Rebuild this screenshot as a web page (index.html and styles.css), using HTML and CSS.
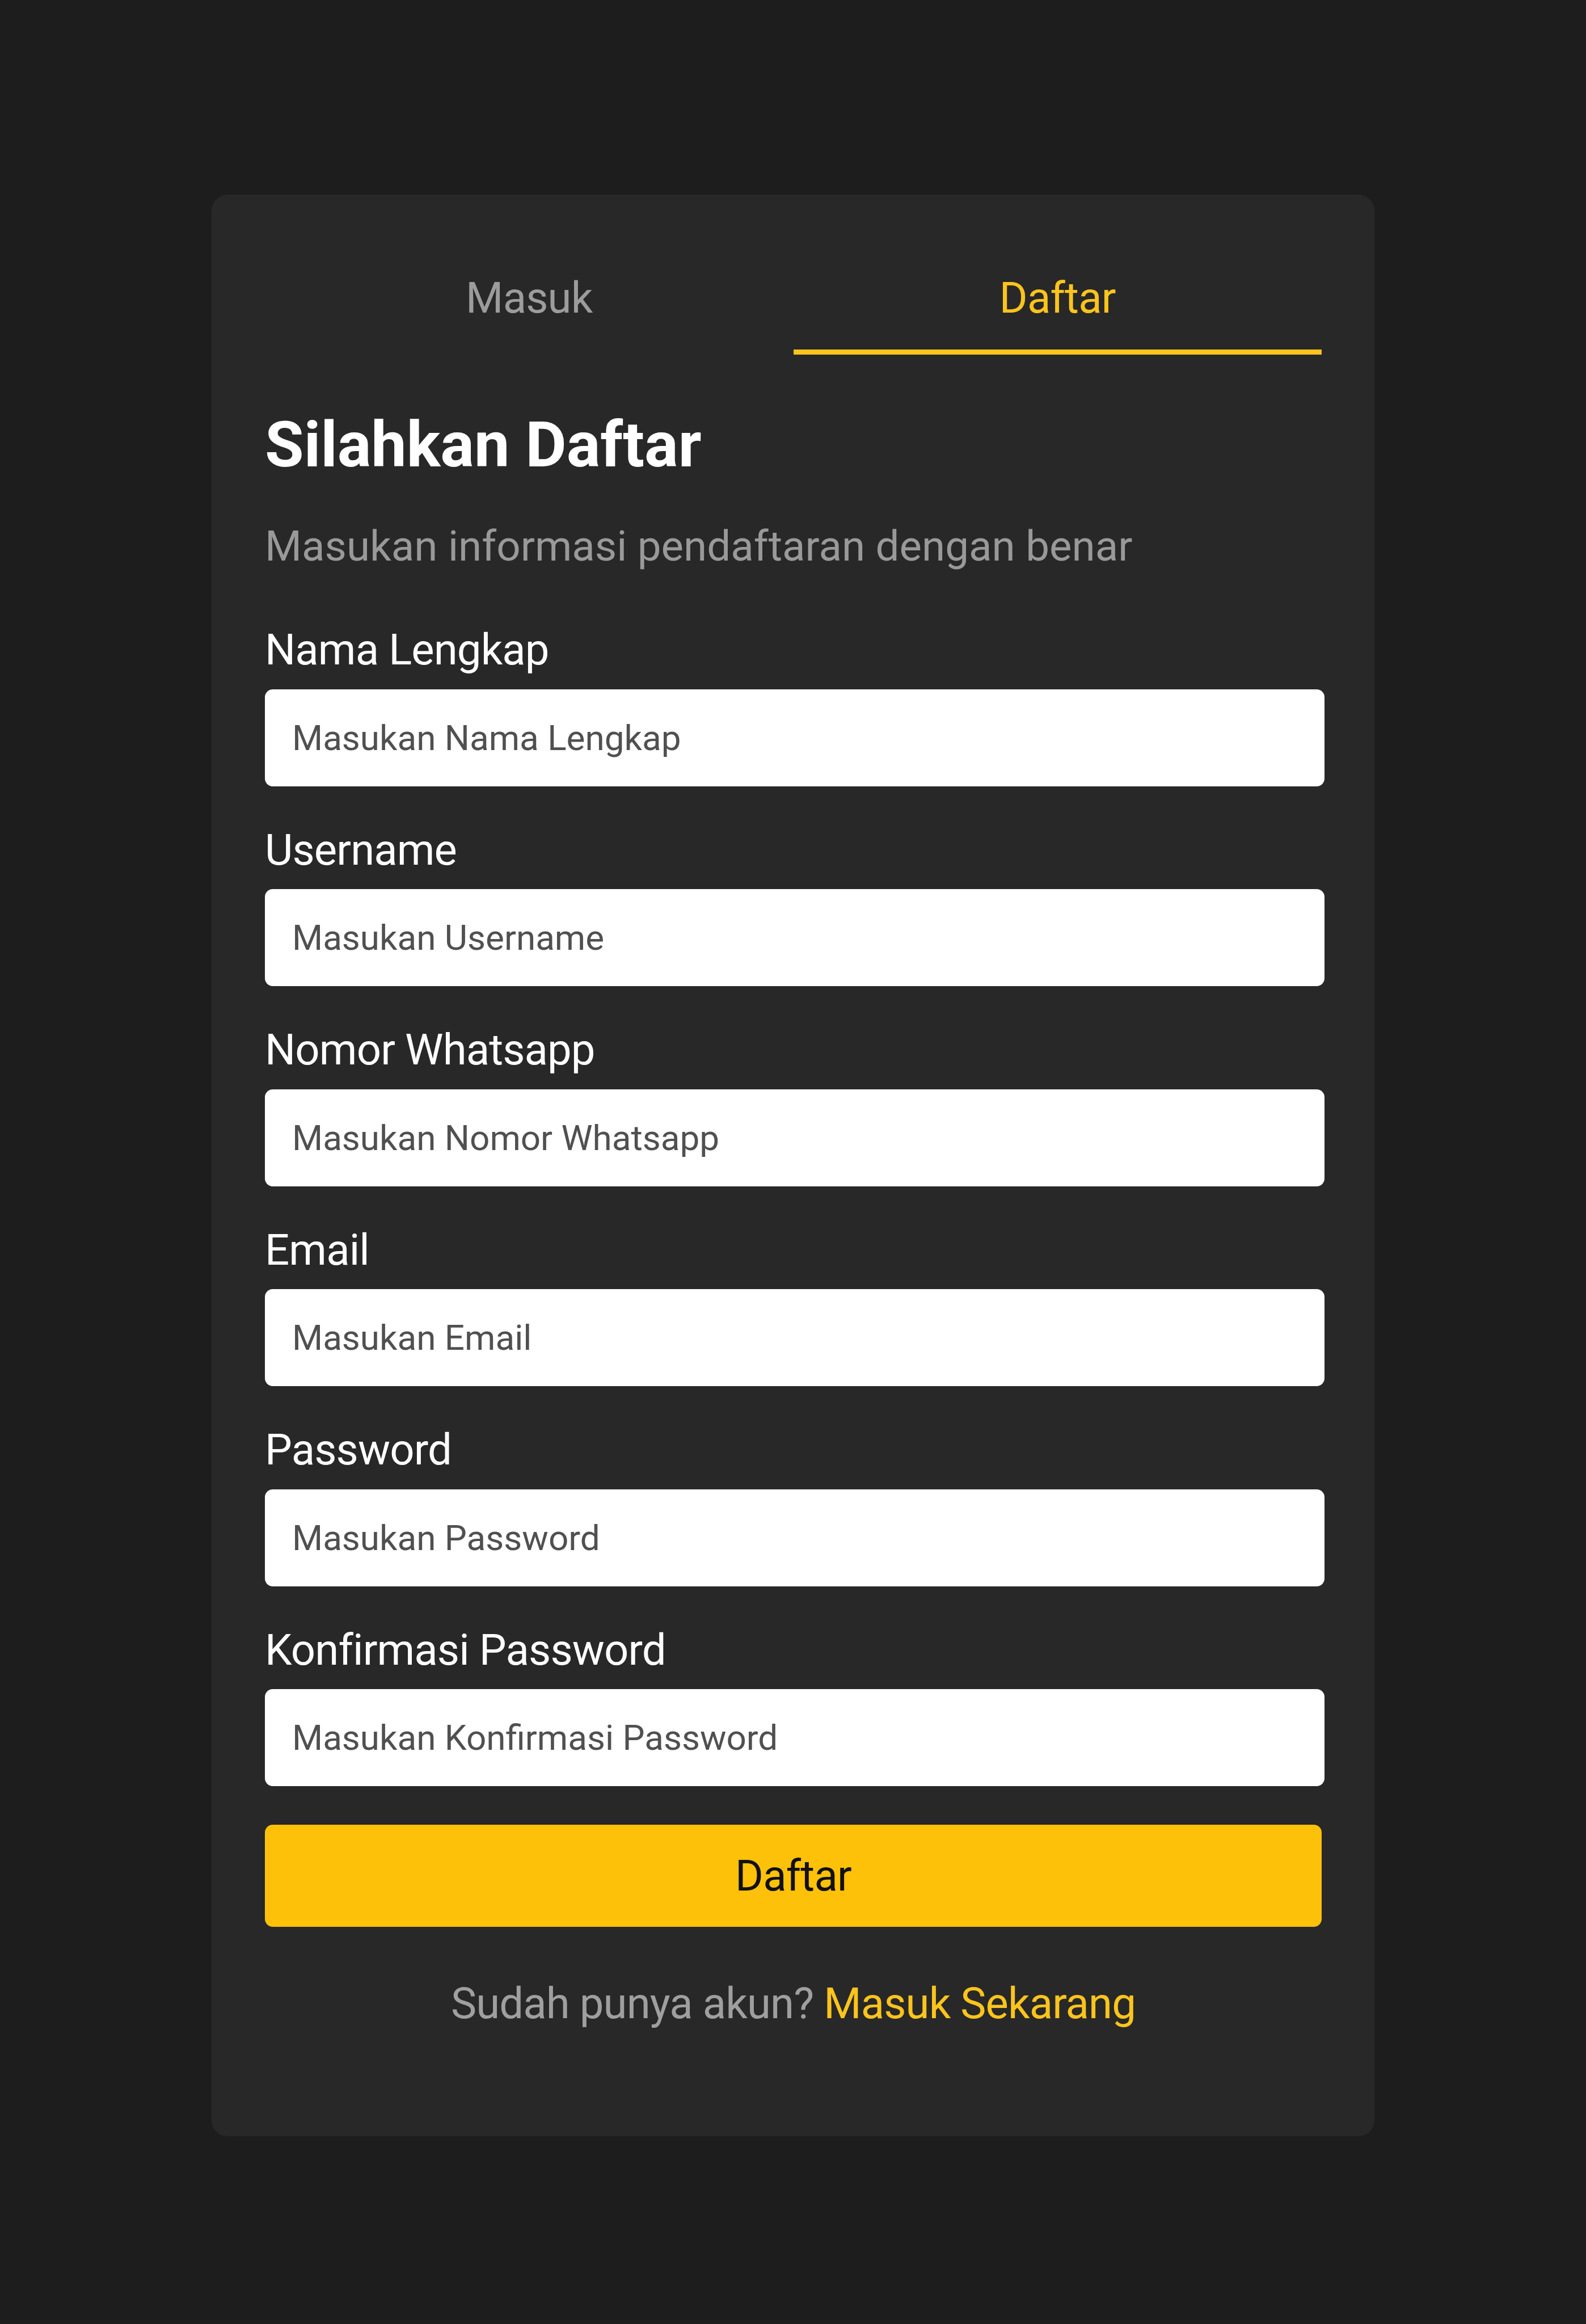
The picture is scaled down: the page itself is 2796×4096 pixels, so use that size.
FILE: index.html
```html
<!DOCTYPE html>
<html lang="id">
<head>
<meta charset="utf-8">
<title>Daftar</title>
<link rel="stylesheet" href="styles.css">
</head>
<body>
<div class="page">
  <div class="card">
    <div class="tabs">
      <div class="tab">Masuk</div>
      <div class="tab active">Daftar</div>
    </div>
    <h1 class="title">Silahkan Daftar</h1>
    <p class="subtitle">Masukan informasi pendaftaran dengan benar</p>
    <form class="form">
      <div class="field">
        <label class="label">Nama Lengkap</label>
        <input class="input" type="text" placeholder="Masukan Nama Lengkap">
      </div>
      <div class="field">
        <label class="label">Username</label>
        <input class="input" type="text" placeholder="Masukan Username">
      </div>
      <div class="field">
        <label class="label">Nomor Whatsapp</label>
        <input class="input" type="text" placeholder="Masukan Nomor Whatsapp">
      </div>
      <div class="field">
        <label class="label">Email</label>
        <input class="input" type="text" placeholder="Masukan Email">
      </div>
      <div class="field">
        <label class="label">Password</label>
        <input class="input" type="password" placeholder="Masukan Password">
      </div>
      <div class="field">
        <label class="label">Konfirmasi Password</label>
        <input class="input" type="password" placeholder="Masukan Konfirmasi Password">
      </div>
      <button class="btn" type="button">Daftar</button>
    </form>
    <p class="footer">Sudah punya akun? <span class="link">Masuk Sekarang</span></p>
  </div>
</div>
</body>
</html>
```
FILE: styles.css
```css
html, body {
  margin: 0;
  padding: 0;
  background: #1d1d1d;
  font-family: Roboto, "Noto Sans", sans-serif;
}
.page {
  min-height: 4096px;
  box-sizing: border-box;
  padding-top: 343px;
  display: flex;
  justify-content: center;
  align-items: flex-start;
}
.card {
  width: 2050px;
  box-sizing: border-box;
  background: #282828;
  border-radius: 28px;
  padding: 94px 93px 189px 94px;
}
.tabs {
  display: grid;
  grid-template-columns: 1fr 1fr;
}
.tab {
  text-align: center;
  font-size: 76px;
  letter-spacing: -0.8px;
  line-height: normal;
  color: #9c9c9c;
  padding: 43px 0 46px;
  border-bottom: 9px solid transparent;
}
.tab.active {
  color: #fcc41c;
  border-bottom-color: #fcc41c;
}
.title {
  margin: 94px 0 0;
  font-size: 111.5px;
  font-weight: 700;
  line-height: normal;
  color: #ffffff;
}
.subtitle {
  margin: 70px 0 0;
  font-size: 74.5px;
  line-height: normal;
  color: #999999;
}
.form {
  margin-top: 94px;
  display: flex;
  flex-direction: column;
  gap: 67px;
}
.field {
  display: flex;
  flex-direction: column;
  gap: 24.5px;
}
.label {
  font-size: 76px;
  letter-spacing: -0.85px;
  line-height: normal;
  color: #ffffff;
}
.input {
  width: calc(100% + 5px);
  height: 171px;
  box-sizing: border-box;
  border: none;
  border-radius: 14px;
  background: #ffffff;
  padding: 0 48px;
  font-family: Roboto, "Noto Sans", sans-serif;
  font-size: 62px;
  color: #222;
  outline: none;
}
.input::placeholder {
  color: #505050;
  opacity: 1;
}
.btn {
  margin-top: 1px;
  width: 100%;
  height: 180px;
  border: none;
  border-radius: 14px;
  background: #fdc10a;
  color: #111111;
  font-family: Roboto, "Noto Sans", sans-serif;
  font-size: 76px;
  letter-spacing: -0.8px;
  padding: 0;
}
.footer {
  margin: 90px 0 0;
  text-align: center;
  font-size: 76px;
  letter-spacing: -0.85px;
  line-height: normal;
  color: #9f9f9f;
}
.link {
  color: #fcc41c;
}
```
